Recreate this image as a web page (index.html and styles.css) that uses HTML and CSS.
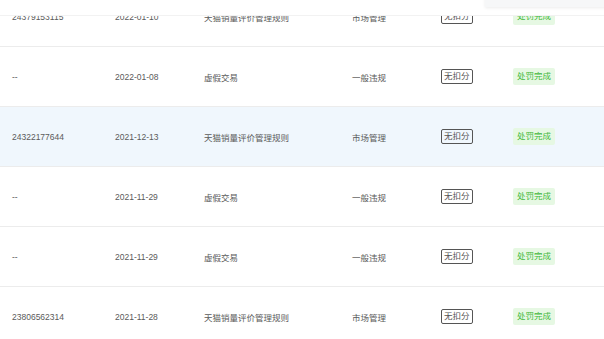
FILE: index.html
```html
<!DOCTYPE html>
<html>
<head>
<meta charset="utf-8">
<link rel="stylesheet" href="styles.css">
</head>
<body>
<div class="sticky"></div>
<div class="table">
  <div class="row">
    <div>24379153115</div><div>2022-01-10</div><div>天猫销量评价管理规则</div><div>市场管理</div><div><span class="tag">无扣分</span></div><div><span class="status">处罚完成</span></div>
  </div>
  <div class="row">
    <div>--</div><div>2022-01-08</div><div>虚假交易</div><div>一般违规</div><div><span class="tag">无扣分</span></div><div><span class="status">处罚完成</span></div>
  </div>
  <div class="row hover">
    <div>24322177644</div><div>2021-12-13</div><div>天猫销量评价管理规则</div><div>市场管理</div><div><span class="tag">无扣分</span></div><div><span class="status">处罚完成</span></div>
  </div>
  <div class="row">
    <div>--</div><div>2021-11-29</div><div>虚假交易</div><div>一般违规</div><div><span class="tag">无扣分</span></div><div><span class="status">处罚完成</span></div>
  </div>
  <div class="row">
    <div>--</div><div>2021-11-29</div><div>虚假交易</div><div>一般违规</div><div><span class="tag">无扣分</span></div><div><span class="status">处罚完成</span></div>
  </div>
  <div class="row">
    <div>23806562314</div><div>2021-11-28</div><div>天猫销量评价管理规则</div><div>市场管理</div><div><span class="tag">无扣分</span></div><div><span class="status">处罚完成</span></div>
  </div>
</div>
<div class="popover"></div>
</body>
</html>
```
FILE: styles.css
```css
html, body {
  margin: 0;
  padding: 0;
  background: #fff;
  overflow: hidden;
}
body {
  font-family: "Liberation Sans", "Noto Sans CJK SC", sans-serif;
  font-size: 8.5px;
  color: #5a5a5a;
}
.table {
  margin-top: -13px;
}
.row {
  display: grid;
  grid-template-columns: 103px 89px 148px 89px 72px 1fr;
  align-items: center;
  height: 59px;
  padding-left: 12px;
  border-bottom: 1px solid #ececec;
}
.row.hover {
  background: #f0f7fd;
}
.tag {
  display: inline-block;
  border: 1px solid #555;
  border-radius: 2px;
  padding: 1px 2px;
  line-height: 11px;
  color: #555;
}
.status {
  display: inline-block;
  background: #e6f8e3;
  color: #44b83d;
  padding: 3px 4px;
  line-height: 11px;
  border-radius: 2px;
}
.sticky {
  position: absolute;
  top: 0;
  left: 0;
  right: 0;
  height: 15px;
  background: #fff;
  border-bottom: 1px solid #f2f2f2;
  z-index: 1;
}
.popover {
  position: absolute;
  top: -10px;
  left: 485px;
  width: 130px;
  height: 17px;
  background: #f6f7f8;
  box-shadow: 0 1px 3px rgba(0,0,0,0.08);
  z-index: 2;
}
```
